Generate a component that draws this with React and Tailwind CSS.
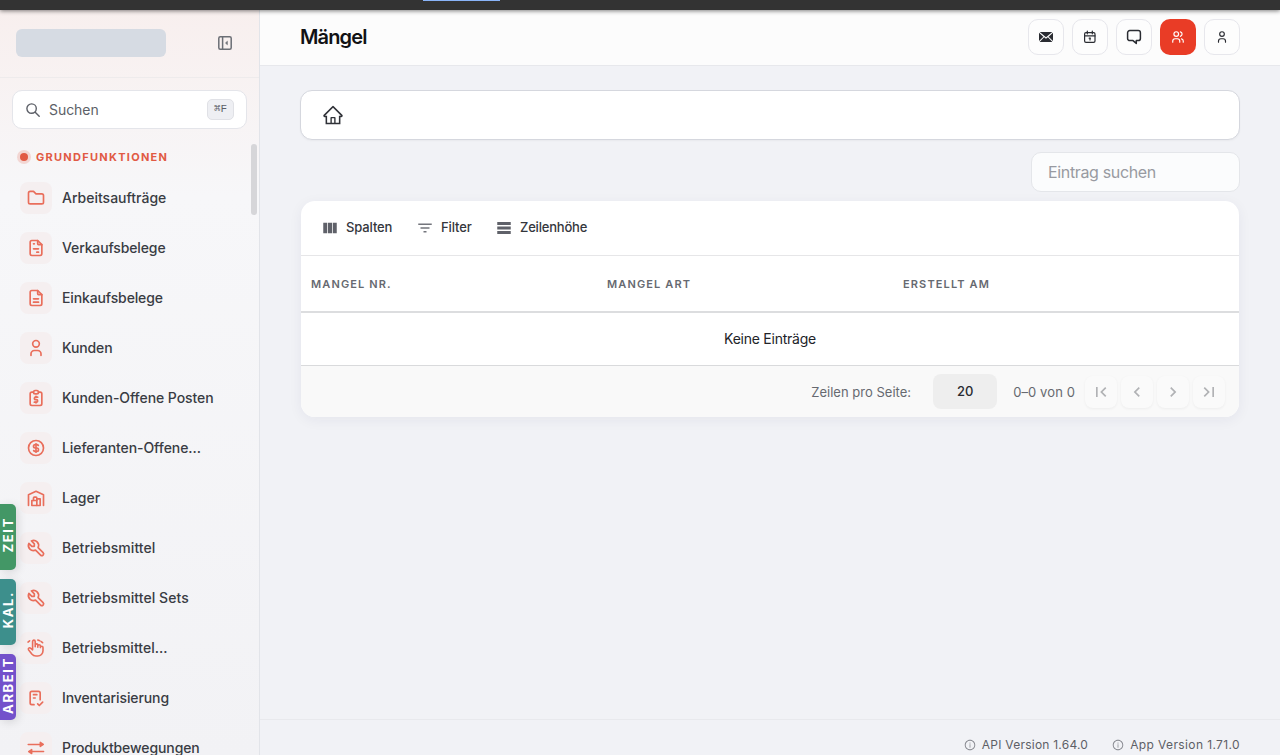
import {
  TbFolder, TbFileInvoice, TbFileDescription, TbUser, TbCoin, TbBuildingWarehouse,
  TbTool, TbChecklist, TbUsers,
} from "react-icons/tb";
import { AiOutlineHome, AiOutlineInfoCircle } from "react-icons/ai";
import {
  MdViewColumn, MdFilterList, MdFirstPage, MdLastPage,
  MdKeyboardArrowLeft, MdKeyboardArrowRight,
} from "react-icons/md";

function ClipboardDollar({ size = 20 }) {
  return (
    <svg width={size} height={size} viewBox="0 0 24 24" fill="none" stroke="currentColor" strokeWidth="2" strokeLinecap="round" strokeLinejoin="round">
      <path d="M9 5h-2a2 2 0 0 0 -2 2v12a2 2 0 0 0 2 2h10a2 2 0 0 0 2 -2v-12a2 2 0 0 0 -2 -2h-2" />
      <path d="M9 5a2 2 0 0 1 2 -2h2a2 2 0 0 1 2 2a2 2 0 0 1 -2 2h-2a2 2 0 0 1 -2 -2" />
      <path d="M14 11h-2.5a1.5 1.5 0 0 0 0 3h1a1.5 1.5 0 0 1 0 3h-2.5" />
      <path d="M12 17v1m0 -8v1" />
    </svg>
  );
}

function HandIcon({ size = 20 }) {
  return (
    <svg width={size} height={size} viewBox="0 0 20 20" fill="none" stroke="currentColor" strokeWidth="1.6" strokeLinecap="round" strokeLinejoin="round">
      <path d="M6.6 11.5V3.4a1.3 1.3 0 0 1 2.6 0v5.4V7.2a1.3 1.3 0 0 1 2.6 0V9.2V8a1.3 1.3 0 0 1 2.6 0v1.6a1.3 1.3 0 0 1 2.6 0v3.2a5.2 5.2 0 0 1-5.2 5.2H10a5.4 5.4 0 0 1-4.2-1.9l-3.3-4.4a1.3 1.3 0 0 1 2-1.6l2.1 1.7" />
      <path d="M2 4.1l1.6-1.3M11.8 2l2 .7M15.2 3.6l1.4 1.1" />
    </svg>
  );
}

function TransferIcon({ size = 20 }) {
  return (
    <svg width={size} height={size} viewBox="0 0 20 20" fill="currentColor" stroke="currentColor" strokeWidth="1.5" strokeLinecap="round" strokeLinejoin="round">
      <path d="M2.2 6.4H16M17.3 6.4l-3-2v4zM17.6 13.6H4M2.7 13.6l3-2v4z" />
    </svg>
  );
}

function CollapseIcon() {
  return (
    <svg width="14" height="14" viewBox="0 0 14 14" fill="none" stroke="currentColor" strokeWidth="1.5" strokeLinejoin="round">
      <rect x=".8" y=".8" width="12.4" height="12.4" rx="1.5" />
      <path d="M4.6 1v12" />
      <path d="M9.4 5.2v3.6L7.5 7z" fill="currentColor" strokeWidth=".6" />
    </svg>
  );
}

function SearchIcon() {
  return (
    <svg width="14" height="14" viewBox="0 0 14 14" fill="none" stroke="currentColor" strokeWidth="1.4" strokeLinecap="round">
      <circle cx="5.6" cy="5.6" r="4.7" />
      <path d="M9.2 9.2l4 4" />
    </svg>
  );
}

function EnvelopeIcon() {
  return (
    <svg width="14" height="10" viewBox="0 0 14 10" fill="currentColor">
      <path d="M.7 0h12.6L7 5.3zM0 .7L4.4 4.7L0 9.1zM14 .7L9.6 4.7L14 9.1zM5.1 5.2L7 6.8L8.9 5.2L13.4 10H.6z" />
    </svg>
  );
}

function CalendarIcon() {
  return (
    <svg width="14" height="14" viewBox="0 0 14 14" fill="none" stroke="currentColor" strokeWidth="1.2" strokeLinecap="round" strokeLinejoin="round">
      <rect x="1.6" y="2.6" width="10.4" height="9.8" rx="1.4" />
      <path d="M4.3 1v2.8M9.3 1v2.8M1.6 5.9H12" />
      <path d="M6.2 8.2h1.2M7 8.2v1.7" />
    </svg>
  );
}

function ChatIcon() {
  return (
    <svg width="16" height="16" viewBox="0 0 16 16" fill="none" stroke="currentColor" strokeWidth="1.5" strokeLinecap="round" strokeLinejoin="round">
      <path d="M3.8 1.6h8.4a2.2 2.2 0 0 1 2.2 2.2v5.6a2.2 2.2 0 0 1-2.2 2.2h-1.9v2.8L7 11.6H3.8a2.2 2.2 0 0 1-2.2-2.2V3.8a2.2 2.2 0 0 1 2.2-2.2z" />
    </svg>
  );
}

function RowsIcon() {
  return (
    <svg width="18" height="18" viewBox="0 0 24 24" fill="currentColor" className="text-[#5f6169]">
      <path d="M21 8H3V4h18v4zm0 2H3v4h18v-4zm0 6H3v4h18v-4z" />
    </svg>
  );
}

const items = [
  ["Arbeitsaufträge", TbFolder, ""],
  ["Verkaufsbelege", TbFileInvoice, "tracking-[-0.13px]"],
  ["Einkaufsbelege", TbFileDescription, "tracking-[-0.13px]"],
  ["Kunden", TbUser, "tracking-[-0.15px]"],
  ["Kunden-Offene Posten", ClipboardDollar, "tracking-[-0.07px]"],
  ["Lieferanten-Offene...", TbCoin, "tracking-[-0.07px]"],
  ["Lager", TbBuildingWarehouse, ""],
  ["Betriebsmittel", TbTool, "tracking-[0.07px]"],
  ["Betriebsmittel Sets", TbTool, "tracking-[0.06px]"],
  ["Betriebsmittel...", HandIcon, "tracking-[0.02px]"],
  ["Inventarisierung", TbChecklist, "tracking-[-0.1px]"],
  ["Produktbewegungen", TransferIcon, "tracking-[-0.1px]"],
];

const tabs = [
  ["ZEIT", "bg-[#439766]"],
  ["KAL.", "bg-[#3d8f8c]"],
  ["ARBEIT", "bg-[#7351cb]"],
];

function Sidebar() {
  return (
    <aside className="flex h-full w-[260px] shrink-0 flex-col border-r border-[#e2e4e9] bg-[linear-gradient(180deg,#f8efee_0%,#f7f7f9_25%,#f2f2f5_100%)]">
      <div className="flex h-[68px] shrink-0 items-center border-b border-[#eeebec] pb-0.5 pl-4">
        <div className="h-7 w-[150px] rounded-md bg-[#d6dbe3]" />
        <div className="ml-[52px] text-[#6b6e75]"><CollapseIcon /></div>
      </div>
      <div className="mx-3 mt-3 flex h-[39px] w-[235px] shrink-0 items-center rounded-[10px] border border-[#e4e5ea] bg-white pr-3 pl-[13px] text-[#5c5f67]">
        <SearchIcon />
        <span className="ml-[9px] text-[14px] tracking-[-0.05px]">Suchen</span>
        <kbd className="ml-auto flex h-[21px] w-[27px] items-center justify-center rounded-[5px] border border-[#e0e1e6] bg-[#eeeff3] font-['Liberation_Mono','DejaVu_Sans_Mono',monospace] text-[11px]">⌘F</kbd>
      </div>
      <div className="mt-[15px] flex min-h-0 flex-1 justify-between">
        <div className="min-w-0 flex-1 overflow-hidden">
          <div className="flex h-[26px] items-center pl-5 text-[11px] font-bold tracking-[1.28px] text-[#e15a44]">
            <span className="mr-2 size-2 rounded-full bg-[#e15a44] ring-3 ring-[#e15a44]/20" />
            GRUNDFUNKTIONEN
          </div>
          <nav className="flex flex-col pt-[3px]">
            {items.map(([label, Icon, spacing]) => (
              <a key={label} className="flex h-[50px] shrink-0 items-center pl-5 text-[14px] font-medium text-[#393c43]">
                <span className="mr-2.5 flex size-8 items-center justify-center rounded-lg bg-[#f5eff0] text-[#e96e5b]">
                  <Icon size={20} />
                </span>
                <span className={`pb-0.5 ${spacing}`}>{label}</span>
              </a>
            ))}
          </nav>
        </div>
        <div className="mr-0.5 h-[71px] w-1.5 rounded-full bg-[#d6d6d9]" />
      </div>
    </aside>
  );
}

function HeaderButton({ children, active }) {
  return (
    <button className={active
      ? "flex size-9 items-center justify-center rounded-[10px] bg-[#e93c26] text-white"
      : "flex size-9 items-center justify-center rounded-[10px] border border-[#e7e7ec] bg-[#fdfdfd] text-[#2a2c32]"}>
      {children}
    </button>
  );
}

function PageButton({ children }) {
  return <button className="flex size-8 items-center justify-center rounded-lg bg-[#fafafa] text-[#b1b2b5] shadow-[0_1px_3px_rgba(0,0,0,0.05)]">{children}</button>;
}

export default function App() {
  return (
    <div className="relative flex h-[755px] w-[1280px] flex-col overflow-hidden bg-[#f1f2f6] font-[Inter,'Liberation_Sans',sans-serif]">
      <div className="z-10 flex h-2.5 shrink-0 bg-[#333333] pl-[423px] shadow-[0_1px_4px_rgba(0,0,0,0.5)]">
        <div className="h-px w-[77px] bg-[#8ab4f8]" />
      </div>
      <div className="flex min-h-0 flex-1">
        <Sidebar />
        <div className="flex min-w-0 flex-1 flex-col">
          <header className="flex h-14 shrink-0 items-center justify-between border-b border-[#e7e8ec] bg-[#fcfcfc] px-10 pb-0.5">
            <h1 className="text-[20px] font-semibold tracking-[-0.85px] text-[#111214]">Mängel</h1>
            <div className="flex gap-2">
              <HeaderButton><EnvelopeIcon /></HeaderButton>
              <HeaderButton><CalendarIcon /></HeaderButton>
              <HeaderButton><ChatIcon /></HeaderButton>
              <HeaderButton active><TbUsers size={14} /></HeaderButton>
              <HeaderButton><TbUser size={14} /></HeaderButton>
            </div>
          </header>
          <main className="flex flex-1 flex-col px-10 pt-6">
            <div className="flex h-[50px] items-center rounded-xl border border-[#d5d7de] bg-white pl-[21px] text-[#303238] shadow-[0_1px_2px_rgba(0,0,0,0.04)]">
              <AiOutlineHome size={22} />
            </div>
            <input placeholder="Eintrag suchen" className="mt-3 h-10 w-[209px] self-end rounded-[10px] border border-[#e4e6ea] bg-[#fbfcfd] px-4 text-[16px] tracking-[-0.35px] placeholder:text-[#989aa1]" />
            <section className="mx-px mt-[9px] flex flex-col overflow-hidden rounded-[14px] bg-white shadow-[0_3px_14px_rgba(30,40,80,0.06)]">
              <div className="flex h-[55px] items-center border-b border-[#e6e6e8] pl-[19.5px] text-[13px] font-medium text-[#34363c]">
                <span className="flex w-[95px] items-center gap-[7.5px] tracking-[-0.12px]"><MdViewColumn size={18} className="text-[#5f6169]" />Spalten</span>
                <span className="flex w-[79px] items-center gap-[7.5px] tracking-[-0.1px]"><MdFilterList size={18} className="text-[#73757c]" />Filter</span>
                <span className="flex items-center gap-[7.5px] tracking-[-0.2px]"><RowsIcon />Zeilenhöhe</span>
              </div>
              <div className="grid h-[57px] grid-cols-[296px_296px_1fr] items-center border-b-2 border-[#dcdddf] pt-0.5 pl-2.5 text-[11px] font-semibold tracking-[1.13px] text-[#666970]">
                <span>MANGEL NR.</span><span>MANGEL ART</span><span>ERSTELLT AM</span>
              </div>
              <div className="flex h-[53px] items-center justify-center border-b border-[#d9dadc] pb-0.5 text-[14px] tracking-[-0.25px] text-[#222328]">Keine Einträge</div>
              <div className="flex h-[51px] items-center justify-end bg-[#f9f9f9] pr-3.5 text-[13px] text-[#666970]">
                <span className="pt-0.5 tracking-[0.02px]">Zeilen pro Seite:</span>
                <span className="mr-4 ml-[22px] flex h-[35px] w-16 items-center justify-center rounded-lg bg-[#eeeeee] font-medium text-[#292b31]">20</span>
                <span className="pt-0.5 tracking-[0.1px]">0–0 von 0</span>
                <div className="ml-2.5 flex gap-1">
                  <PageButton><MdFirstPage size={20} /></PageButton>
                  <PageButton><MdKeyboardArrowLeft size={20} /></PageButton>
                  <PageButton><MdKeyboardArrowRight size={20} /></PageButton>
                  <PageButton><MdLastPage size={20} /></PageButton>
                </div>
              </div>
            </section>
          </main>
          <footer className="flex h-9 shrink-0 items-center justify-end gap-6 border-t border-[#e8e9ed] pt-3.5 pr-10 text-[12px] text-[#5d5f66]">
            <span className="flex items-center gap-1.5 tracking-[0.23px]"><AiOutlineInfoCircle size={12} className="text-[#85878e]" />API Version 1.64.0</span>
            <span className="flex items-center gap-1.5 tracking-[0.38px]"><AiOutlineInfoCircle size={12} className="text-[#85878e]" />App Version 1.71.0</span>
          </footer>
        </div>
      </div>
      <div className="absolute top-[504px] left-0 flex flex-col gap-[9px]">
        {tabs.map(([label, color]) => (
          <div key={label} className={`${color} flex h-[66px] w-4 items-center justify-center rounded-r-[5px] pb-1 text-[13px] leading-4 font-bold tracking-[1.65px] text-white shadow-[2px_2px_10px_rgba(0,0,0,0.12)]`}>
            <span className="rotate-180 [writing-mode:vertical-rl]">{label}</span>
          </div>
        ))}
      </div>
    </div>
  );
}
